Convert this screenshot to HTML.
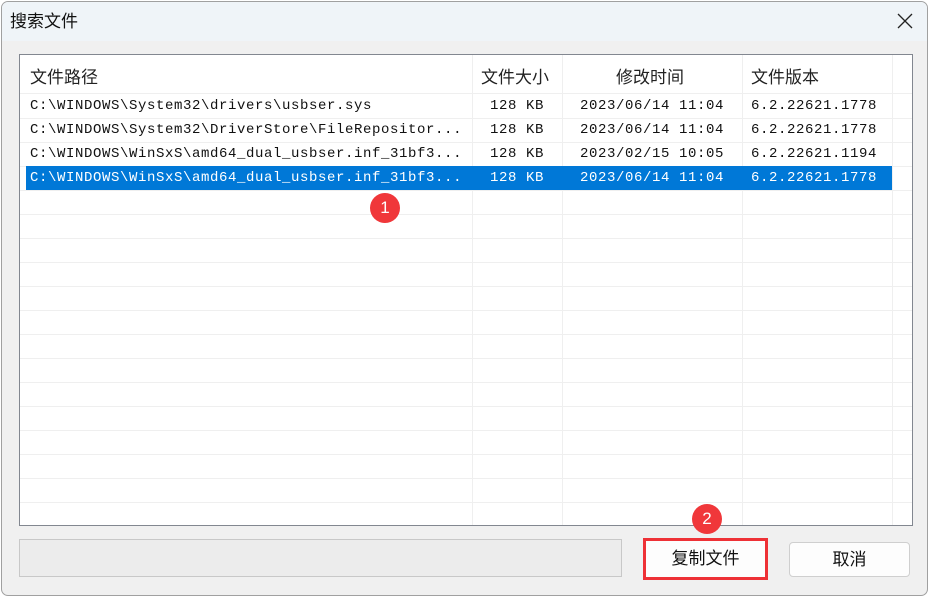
<!DOCTYPE html>
<html><head><meta charset="utf-8"><style>
*{margin:0;padding:0;box-sizing:border-box}
body{width:929px;height:597px;background:#fff;position:relative;overflow:hidden;font-family:"Liberation Sans","Noto Sans CJK SC",sans-serif}
.dlg{position:absolute;left:1px;top:1px;width:927px;height:595px;border:1px solid #a0a0a0;border-radius:7px;background:#f0f0f0;overflow:hidden}
.title{position:absolute;left:0;top:0;width:100%;height:39px;background:#eff4f8;font-size:17px;color:#111;padding:5px 0 0 8px}
.x{position:absolute;right:14px;top:11px}
.list{position:absolute;left:19px;top:54px;width:894px;height:472px;border:1px solid #828790;background:#fff;overflow:hidden}
.vl{position:absolute;top:0;bottom:0;width:1px;background:#efefef}
.hl{position:absolute;left:0;right:0;height:1px;background:#efefef}
.hdr{position:absolute;top:0;left:0;right:0;height:38px;background:#fff}
.h{position:absolute;top:8px;font-size:17px;color:#222}
.row{position:absolute;left:6px;height:24px;width:866px;font-family:"Liberation Mono",monospace;font-size:14px;letter-spacing:0.6px;color:#111}
.row span{position:absolute;top:4px;white-space:nowrap}
.sel{background:#0078d7;color:#fff}
.badge{position:absolute;width:30px;height:30px;border-radius:50%;background:#f0373a;color:#fff;font-size:17px;text-align:center;line-height:30px}
.status{position:absolute;left:19px;top:539px;width:603px;height:38px;border:1px solid #c8c8c8;background:#ececec}
.btn{position:absolute;background:#fdfdfd;border:1px solid #cfcfcf;border-radius:4px;font-size:17px;text-align:center;color:#111}
</style></head><body>
<div class="dlg">
<div class="title">搜索文件<svg class="x" width="16" height="16" viewBox="0 0 16 16"><path d="M1 1L15 15M15 1L1 15" stroke="#222" stroke-width="1.3"/></svg></div>
</div>
<div class="list">
<div class="hdr"></div>
<div class="vl" style="left:452px"></div><div class="vl" style="left:542px"></div><div class="vl" style="left:722px"></div><div class="vl" style="left:872px"></div>
<div class="hl" style="top:38px"></div><div class="hl" style="top:63px"></div><div class="hl" style="top:87px"></div><div class="hl" style="top:111px"></div><div class="hl" style="top:135px"></div>
<div class="hl" style="top:159px"></div><div class="hl" style="top:183px"></div><div class="hl" style="top:207px"></div><div class="hl" style="top:231px"></div><div class="hl" style="top:255px"></div><div class="hl" style="top:279px"></div><div class="hl" style="top:303px"></div><div class="hl" style="top:327px"></div><div class="hl" style="top:351px"></div><div class="hl" style="top:375px"></div><div class="hl" style="top:399px"></div><div class="hl" style="top:423px"></div><div class="hl" style="top:447px"></div>
<div class="h" style="left:10px">文件路径</div><div class="h" style="left:461px">文件大小</div><div class="h" style="left:596px">修改时间</div><div class="h" style="left:731px">文件版本</div>
<div class="row" style="top:39px"><span style="left:4px">C:\WINDOWS\System32\drivers\usbser.sys</span><span style="left:464px">128 KB</span><span style="left:554px">2023/06/14 11:04</span><span style="left:725px">6.2.22621.1778</span></div>
<div class="row" style="top:63px"><span style="left:4px">C:\WINDOWS\System32\DriverStore\FileRepositor...</span><span style="left:464px">128 KB</span><span style="left:554px">2023/06/14 11:04</span><span style="left:725px">6.2.22621.1778</span></div>
<div class="row" style="top:87px"><span style="left:4px">C:\WINDOWS\WinSxS\amd64_dual_usbser.inf_31bf3...</span><span style="left:464px">128 KB</span><span style="left:554px">2023/02/15 10:05</span><span style="left:725px">6.2.22621.1194</span></div>
<div class="row sel" style="top:111px"><span style="left:4px">C:\WINDOWS\WinSxS\amd64_dual_usbser.inf_31bf3...</span><span style="left:464px">128 KB</span><span style="left:554px">2023/06/14 11:04</span><span style="left:725px">6.2.22621.1778</span></div>
</div>
<div class="badge" style="left:370px;top:193px">1</div>
<div class="status"></div>
<div class="btn" style="left:643px;top:538px;width:125px;height:42px;border:3px solid #ee3136;border-radius:0;line-height:36px">复制文件</div>
<div class="btn" style="left:789px;top:542px;width:121px;height:35px;line-height:33px">取消</div>
<div class="badge" style="left:692px;top:504px">2</div>
</body></html>
